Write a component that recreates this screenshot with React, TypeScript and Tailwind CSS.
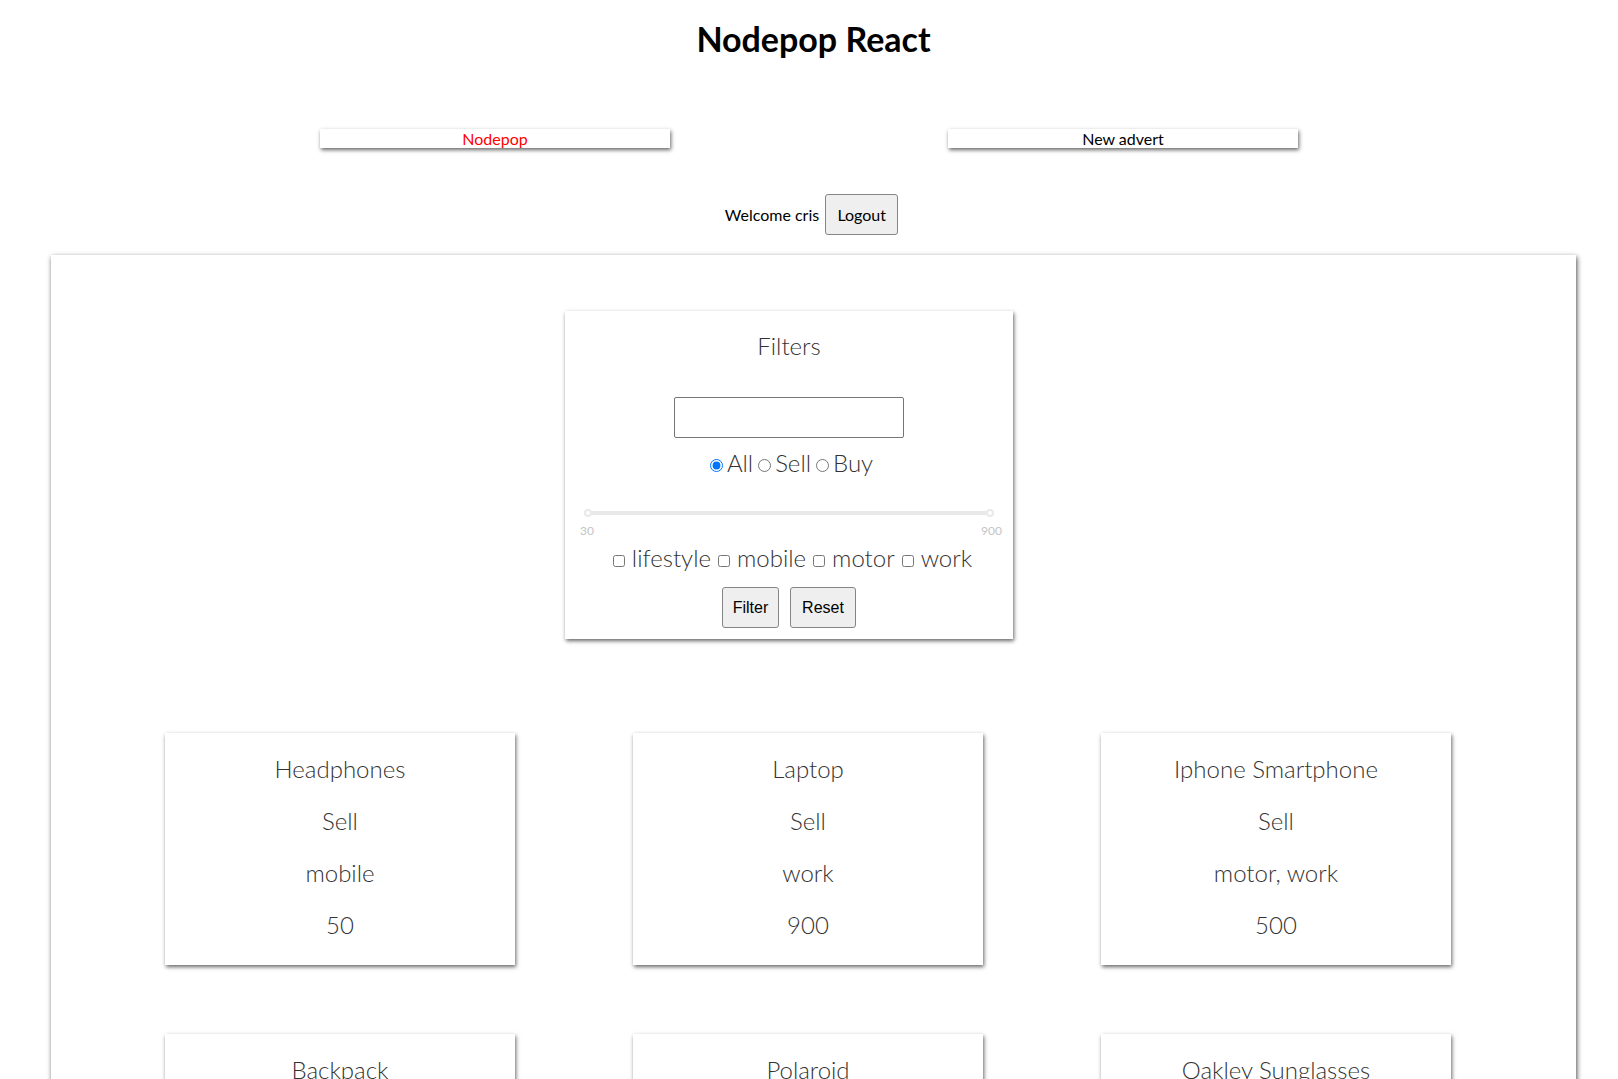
import React from "react";

type Advert = {
  name: string;
  sale: string;
  tags: string;
  price: number;
};

const adverts: Advert[] = [
  { name: "Headphones", sale: "Sell", tags: "mobile", price: 50 },
  { name: "Laptop", sale: "Sell", tags: "work", price: 900 },
  { name: "Iphone Smartphone", sale: "Sell", tags: "motor, work", price: 500 },
  { name: "Backpack", sale: "Buy", tags: "lifestyle", price: 30 },
  { name: "Polaroid", sale: "Sell", tags: "lifestyle", price: 120 },
  { name: "Oakley Sunglasses", sale: "Buy", tags: "lifestyle", price: 80 },
];

const tags = ["lifestyle", "mobile", "motor", "work"];

const shadow = "shadow-[1px_2px_4px_rgba(0,0,0,0.6)]";

const AdvertCard = ({ advert }: { advert: Advert }) => (
  <div
    className={`w-[350px] h-[232px] bg-white ${shadow} pt-[22px] pb-[26px] flex flex-col gap-[24px] text-center text-[24px] leading-[28px] font-light text-[#333]`}
  >
    <p>{advert.name}</p>
    <p>{advert.sale}</p>
    <p>{advert.tags}</p>
    <p>{advert.price}</p>
  </div>
);

const Filters = () => (
  <div
    className={`ml-[459px] w-[448px] h-[328px] bg-white ${shadow} pt-[21px] flex flex-col items-center text-[#333] font-light`}
  >
    <h2 className="text-[24px] leading-[28px] font-light">Filters</h2>
    <input
      type="text"
      className="mt-[37px] w-[230px] h-[41px] border border-[#767676] rounded-[2px] bg-white"
    />
    <div className="mt-[11px] h-[28px] text-[24px] leading-[28px]">
      <input type="radio" name="sale" defaultChecked className="ml-[5px] mr-[4px] w-[13px] h-[13px]" />
      All
      <input type="radio" name="sale" className="ml-[5px] mr-[4px] w-[13px] h-[13px]" />
      Sell
      <input type="radio" name="sale" className="ml-[5px] mr-[4px] w-[13px] h-[13px]" />
      Buy
    </div>
    <div className="w-[410px] pt-[32px]">
      <div className="relative h-[8px]">
        <div className="absolute left-[2px] right-[2px] top-[2px] h-[4px] rounded bg-[#e9e9e9]" />
        <div className="absolute left-0 top-0 w-[8px] h-[8px] rounded-full border-2 border-[#e9e9e9] bg-white" />
        <div className="absolute right-0 top-0 w-[8px] h-[8px] rounded-full border-2 border-[#e9e9e9] bg-white" />
      </div>
      <div className="mt-[7px] h-[14px] flex justify-between text-[12px] leading-[14px] text-[#c4c4c4] font-normal">
        <span className="-ml-[4px]">30</span>
        <span className="-mr-[8px]">900</span>
      </div>
    </div>
    <div className="mt-[6px] h-[28px] text-[24px] leading-[28px]">
      {tags.map((t) => (
        <React.Fragment key={t}>
          <input type="checkbox" className="ml-[7px] mr-[7px] w-[12px] h-[12px]" />
          {t}
        </React.Fragment>
      ))}
    </div>
    <div className="mt-[15px] flex gap-[11px] font-['Liberation_Sans',Arial,sans-serif] font-normal text-[16px] text-black">
      <button className="w-[57px] h-[41px] bg-[#efefef] border border-[#858585] rounded-[3px]">
        Filter
      </button>
      <button className="w-[66px] h-[41px] bg-[#efefef] border border-[#858585] rounded-[3px]">
        Reset
      </button>
    </div>
  </div>
);

export default function App() {
  return (
    <div className="min-h-screen bg-white font-['Lato',sans-serif] text-black pb-[60px]">
      <h1 className="mt-[20px] pl-[9px] text-center text-[34px] leading-[38px] font-bold">
        Nodepop React
      </h1>

      <nav className="mt-[71px] flex justify-center gap-[278px] text-[16px] leading-[19px]">
        <a className={`block w-[350px] h-[19px] bg-white ${shadow} text-center text-[#ff0000]`}>
          Nodepop
        </a>
        <a className={`block w-[350px] h-[19px] bg-white ${shadow} text-center`}>
          New advert
        </a>
      </nav>

      <div className="mt-[46px] pl-[5px] flex justify-center items-center gap-[6px] text-[16px]">
        <span>Welcome cris</span>
        <button className="w-[73px] h-[41px] bg-[#efefef] border border-[#858585] rounded-[3px]">
          Logout
        </button>
      </div>

      <main className={`mt-[20px] ml-[51px] w-[1525px] bg-white shadow-[1px_2px_5px_rgba(0,0,0,0.7)] pt-[56px] pb-[60px] pl-[55px] pr-[66px]`}>
        <Filters />
        <div className="mt-[94px] grid grid-cols-3 gap-y-[69px] justify-items-center">
          {adverts.map((a) => (
            <AdvertCard key={a.name} advert={a} />
          ))}
        </div>
      </main>
    </div>
  );
}
